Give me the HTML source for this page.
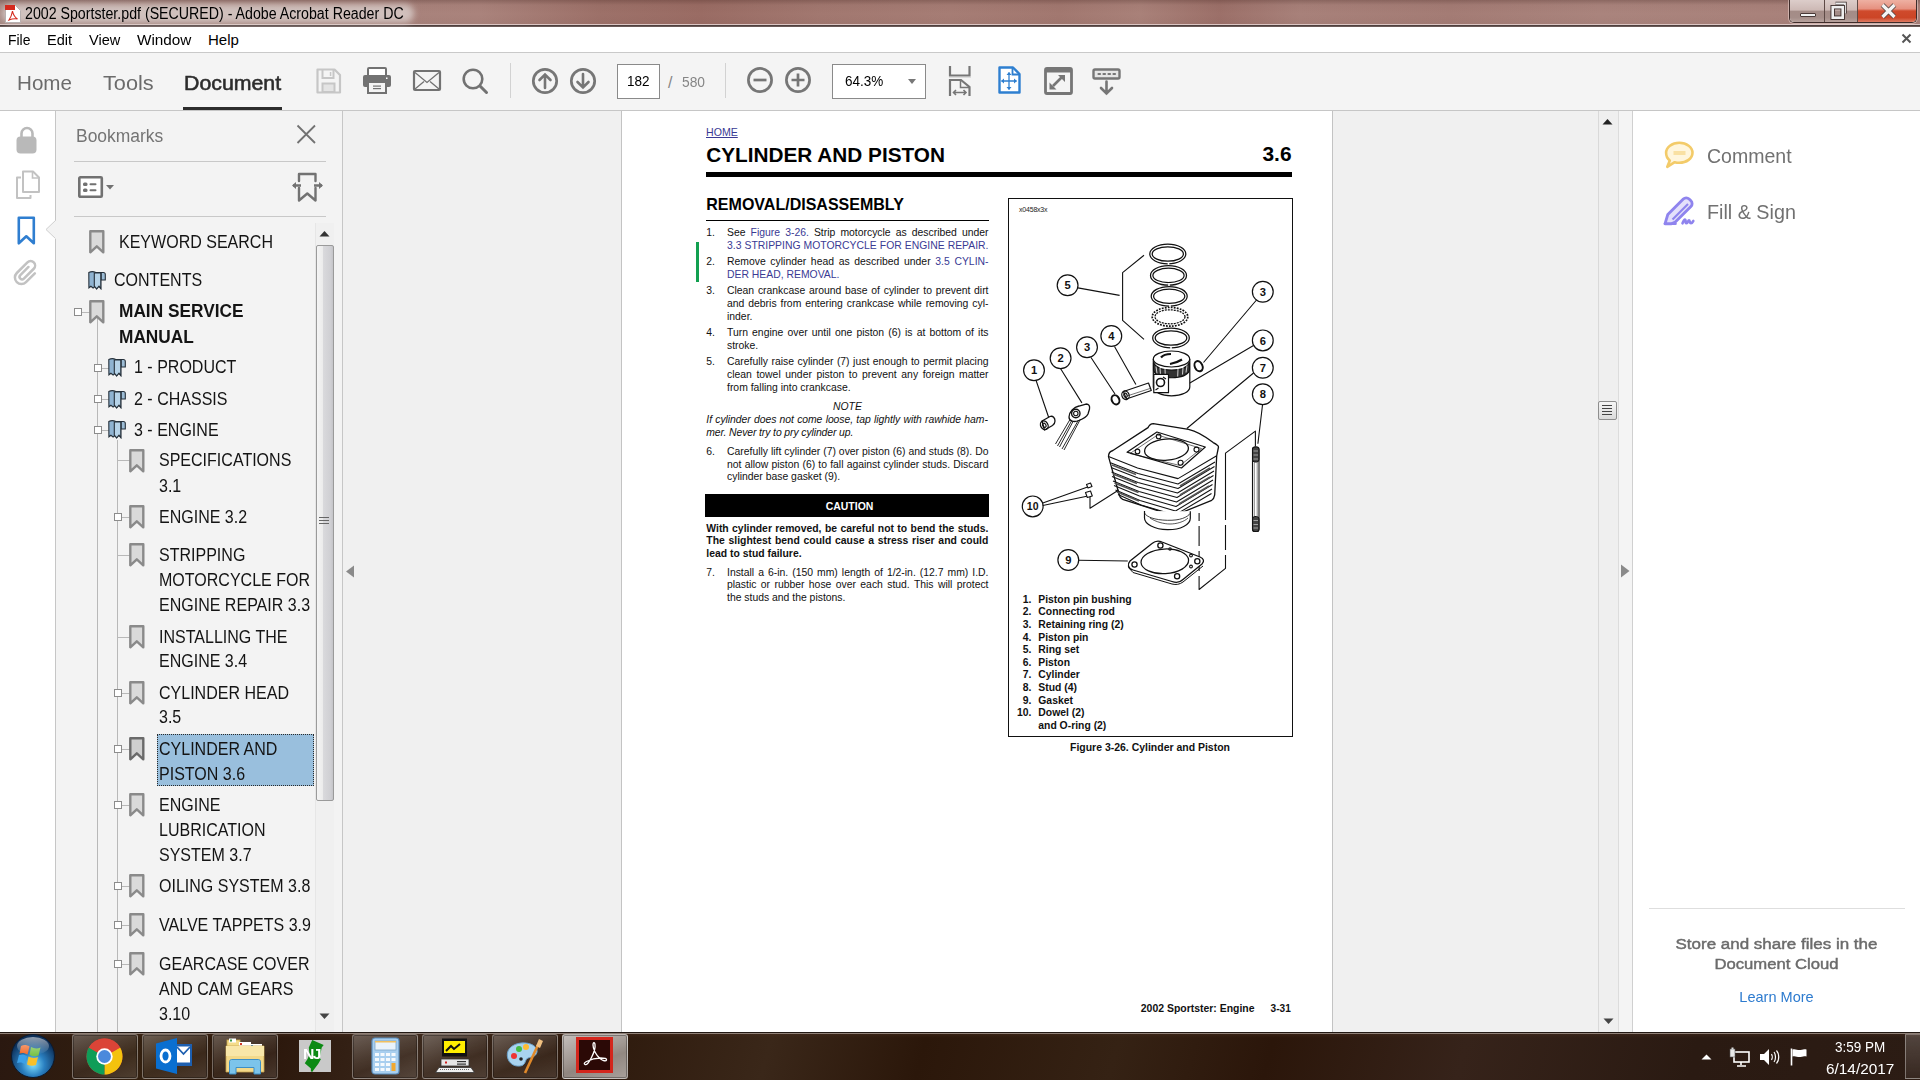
<!DOCTYPE html>
<html><head><meta charset="utf-8">
<style>
*{margin:0;padding:0;box-sizing:border-box}
html,body{width:1920px;height:1080px;overflow:hidden;background:#fff;font-family:"Liberation Sans",sans-serif}
.a{position:absolute}
.t{position:absolute;white-space:nowrap;line-height:1;transform-origin:0 0}
svg{position:absolute;overflow:visible}
#title{left:0;top:0;width:1920px;height:27px;background:linear-gradient(90deg,#a88a84 0.0%,#a6827b 15.6%,#aa837c 25.0%,#9d7169 31.2%,#9a6c64 36.5%,#a27870 42.7%,#a67d75 49.5%,#a27870 55.2%,#a98179 59.4%,#9c7069 63.5%,#a8817a 67.7%,#a47c75 75.5%,#aa847d 83.3%,#a88079 100.0%)}
#title .shade{position:absolute;left:0;right:0;top:0;height:27px;background:linear-gradient(180deg,rgba(60,30,25,.28) 0,rgba(60,30,25,.04) 5px,rgba(255,255,255,0) 14px,rgba(40,20,20,.03) 24px,#dcc6c4 24px,#dcc6c4 25px,#4e403e 25px,#4e403e 26px,#6a5a58 26px)}
#menubar{left:0;top:27px;width:1920px;height:26px;background:#fff;border-bottom:1px solid #c9c9c9}
#toolbar{left:0;top:53px;width:1920px;height:58px;background:#f4f4f4;border-bottom:1px solid #c6c6c6}
#leftnav{left:0;top:111px;width:56px;height:921px;background:#fff;border-right:1px solid #c6c6c6}
#bmpanel{left:56px;top:111px;width:287px;height:921px;background:#f3f3f3;border-right:1px solid #c6c6c6}
#docarea{left:343px;top:111px;width:1290px;height:921px;background:#f0f0f0}
#page{left:621px;top:111px;width:712px;height:921px;background:#fff;border-left:1px solid #c3c3c3;border-right:1px solid #c3c3c3}
#rpane{left:1632px;top:111px;width:288px;height:921px;background:#fff;border-left:1px solid #d0d0d0}
#taskbar{left:0;top:1032px;width:1920px;height:48px;background:linear-gradient(180deg,rgba(70,45,30,.6) 0,rgba(0,0,0,0) 6px),linear-gradient(105deg,#2a1810 0%,#33200f 8%,#2b170b 14%,#3a281c 22%,#2c180b 30%,#3a2719 40%,#2b170a 48%,#352214 58%,#2b160a 66%,#36231a 76%,#2a1a12 88%,#2c1c14 100%)}
.tb{top:1034px;width:66px;height:45px;border:1px solid rgba(255,255,255,.28);border-radius:3px;background:linear-gradient(160deg,rgba(255,255,255,.28) 0,rgba(255,255,255,.12) 40%,rgba(255,255,255,.06) 60%,rgba(255,255,255,.14) 100%);box-shadow:inset 0 0 0 1px rgba(0,0,0,.3)}
.tb.act{background:linear-gradient(160deg,rgba(255,255,255,.72) 0,rgba(255,255,255,.55) 45%,rgba(255,255,255,.48) 60%,rgba(255,255,255,.58) 100%)}
.menu{top:32px;font-size:15px;color:#000}
.tab{font-size:20px;color:#6b6b6b}
</style></head><body>
<!-- TITLE BAR -->
<div id="title" class="a"><div class="shade"></div></div>
<div class="a" style="left:2px;top:4px;width:412px;height:19px;background:rgba(222,212,209,.75);border-radius:9px;filter:blur(3px)"></div>
<svg style="left:4px;top:4px" width="18" height="20" viewBox="0 0 18 20">
  <path d="M1.5 1.5h10l5 5v12h-15z" fill="#fff" stroke="#b8b0b0" stroke-width="1"/>
  <rect x="1" y="1" width="10" height="5" fill="#d42a1e"/>
  <path d="M5 16c2-3 3-6 3.5-9 .5 3 2 6 5 8-3-.5-6 0-8.5 1z" fill="none" stroke="#d42a1e" stroke-width="1.1"/>
</svg>
<div class="t" style="left:25px;top:6px;font-size:16px;color:#000;transform:scaleX(.887)">2002 Sportster.pdf (SECURED) - Adobe Acrobat Reader DC</div>
<!-- window buttons -->
<div class="a" style="left:1789px;top:0;width:128px;height:23px;border:1px solid #3e2c2a;border-top:none;border-radius:0 0 5px 5px;overflow:hidden;background:#fff;box-shadow:0 0 0 1px rgba(255,235,230,.45)">
  <div class="a" style="left:0;top:0;width:35px;height:22px;background:linear-gradient(180deg,#dccdca 0,#cdb9b5 45%,#a48c87 52%,#a58e89 80%,#b8a29d 100%);border-right:1px solid #5e4a46"></div>
  <div class="a" style="left:35px;top:0;width:33px;height:22px;background:linear-gradient(180deg,#dccdca 0,#cdb9b5 45%,#a48c87 52%,#a58e89 80%,#b8a29d 100%);border-right:1px solid #5e4a46"></div>
  <div class="a" style="left:68px;top:0;width:60px;height:22px;background:linear-gradient(180deg,#eeb0a2 0,#e69180 40%,#cf4a2c 50%,#cc4526 80%,#de7a62 100%)"></div>
  <div class="a" style="left:10px;top:13px;width:16px;height:4px;background:#f2f2f2;border:1px solid #4a3a38;border-radius:1px"></div>
  <svg style="left:41px;top:2px" width="18" height="18" viewBox="0 0 18 18">
   <path d="M4.500 1.500h9.500v10" fill="none" stroke="#3a2c2a" stroke-width="3.400"/>
   <path d="M4.500 1.500h9.500v10" fill="none" stroke="#eee" stroke-width="1.800"/>
   <rect x="1.700" y="5.200" width="10" height="10.500" fill="none" stroke="#3a2c2a" stroke-width="4.400"/>
   <rect x="1.700" y="5.200" width="10" height="10.500" fill="none" stroke="#eee" stroke-width="2.600"/>
  </svg>
  <svg style="left:90px;top:3px" width="17" height="16" viewBox="0 0 17 16"><path d="M2.500 2l12 12M14.500 2l-12 12" stroke="#5a4a48" stroke-width="5"/><path d="M2.500 2l12 12M14.500 2l-12 12" stroke="#f4f4f4" stroke-width="3.200"/></svg>
</div>

<!-- MENU BAR -->
<div id="menubar" class="a"></div>
<div class="t menu" style="left:8px;transform:scaleX(.93)">File</div>
<div class="t menu" style="left:47px;transform:scaleX(.97)">Edit</div>
<div class="t menu" style="left:89px;transform:scaleX(.97)">View</div>
<div class="t menu" style="left:137px;transform:scaleX(1.02)">Window</div>
<div class="t menu" style="left:208px">Help</div>
<svg style="left:1900px;top:33px" width="14" height="12" viewBox="0 0 14 12"><path d="M2.5 1.5l8 8M10.5 1.5l-8 8" stroke="#555" stroke-width="2"/></svg>

<!-- TOOLBAR -->
<div id="toolbar" class="a"></div>
<div class="t tab" style="left:17px;top:73px;transform:scaleX(1.03)">Home</div>
<div class="t tab" style="left:103px;top:73px;transform:scaleX(1.086)">Tools</div>
<div class="t tab" style="left:184px;top:73px;color:#2c2c2c;-webkit-text-stroke:.55px #2c2c2c;transform:scaleX(1.065)">Document</div>
<div class="a" style="left:183px;top:107px;width:99px;height:3px;background:#2c2c2c"></div>
<!-- save -->
<svg style="left:316px;top:68px" width="26" height="26" viewBox="0 0 26 26">
  <path d="M1.5 1.5h17l5.5 5.5v17.5h-22.5z" fill="none" stroke="#c6c6c6" stroke-width="2.2" stroke-linejoin="round"/>
  <path d="M6.5 2v8h11v-8" fill="none" stroke="#c6c6c6" stroke-width="2"/>
  <rect x="13.8" y="4" width="1.5" height="4" fill="#c6c6c6"/>
  <rect x="6.5" y="15.5" width="12" height="8.5" fill="#e4e4e4" stroke="#c6c6c6" stroke-width="2"/>
</svg>
<!-- print -->
<svg style="left:363px;top:67px" width="28" height="27" viewBox="0 0 28 27">
  <rect x="5" y="1" width="18" height="10" fill="#fff" stroke="#727272" stroke-width="2" rx="1"/>
  <rect x="0" y="8" width="28" height="12" rx="2" fill="#727272"/>
  <rect x="5" y="15" width="18" height="11" fill="#f4f4f4" stroke="#727272" stroke-width="2"/>
  <rect x="10" y="18.5" width="8" height="1.2" fill="#727272"/><rect x="10" y="21" width="8" height="1.2" fill="#727272"/>
  <rect x="23" y="10.5" width="1.5" height="1.5" fill="#fff"/>
</svg>
<!-- mail -->
<svg style="left:413px;top:70px" width="28" height="21" viewBox="0 0 28 21">
  <rect x="1" y="1" width="26" height="19" rx="1" fill="none" stroke="#727272" stroke-width="2.2"/>
  <path d="M2 2.5l12 10 12-10M2 19l9-7.5M26 19l-9-7.5" fill="none" stroke="#727272" stroke-width="1.3"/>
</svg>
<!-- search -->
<svg style="left:462px;top:68px" width="27" height="26" viewBox="0 0 27 26">
  <circle cx="11" cy="11" r="9.3" fill="none" stroke="#727272" stroke-width="2.6"/>
  <path d="M18 18l6.5 6.5" stroke="#727272" stroke-width="3" stroke-linecap="round"/>
</svg>
<div class="a" style="left:510px;top:63px;width:1px;height:35px;background:#d2d2d2"></div>
<!-- up/down -->
<svg style="left:531px;top:67px" width="28" height="28" viewBox="0 0 28 28">
  <circle cx="14" cy="14" r="11.7" fill="none" stroke="#767676" stroke-width="2.7"/>
  <path d="M14 21V7.5M8.5 13l5.5-5.5 5.5 5.5" fill="none" stroke="#767676" stroke-width="2.6" stroke-linecap="round"/>
</svg>
<svg style="left:569px;top:67px" width="28" height="28" viewBox="0 0 28 28">
  <circle cx="14" cy="14" r="11.7" fill="none" stroke="#767676" stroke-width="2.7"/>
  <path d="M14 7v13.5M8.5 15l5.5 5.5 5.5-5.5" fill="none" stroke="#767676" stroke-width="2.6" stroke-linecap="round"/>
</svg>
<div class="a" style="left:617px;top:64px;width:43px;height:35px;background:#fff;border:1px solid #8a8a8a"></div>
<div class="t" style="left:627px;top:73px;font-size:15px;color:#000;transform:scaleX(.9)">182</div>
<div class="t" style="left:668px;top:75px;font-size:16px;color:#858585">/</div>
<div class="t" style="left:682px;top:74px;font-size:15px;color:#858585;transform:scaleX(.92)">580</div>
<div class="a" style="left:725px;top:63px;width:1px;height:35px;background:#d2d2d2"></div>
<svg style="left:746px;top:66px" width="28" height="28" viewBox="0 0 28 28">
  <circle cx="14" cy="14" r="11.6" fill="none" stroke="#767676" stroke-width="2.7"/>
  <path d="M7.5 14h13" stroke="#767676" stroke-width="2.7"/>
</svg>
<svg style="left:784px;top:66px" width="28" height="28" viewBox="0 0 28 28">
  <circle cx="14" cy="14" r="11.6" fill="none" stroke="#767676" stroke-width="2.7"/>
  <path d="M7.5 14h13M14 7.5v13" stroke="#767676" stroke-width="2.7"/>
</svg>
<div class="a" style="left:832px;top:64px;width:94px;height:35px;background:#fff;border:1px solid #8a8a8a"></div>
<div class="t" style="left:845px;top:73px;font-size:15px;color:#000;transform:scaleX(.9)">64.3%</div>
<svg style="left:907px;top:79px" width="10" height="6" viewBox="0 0 10 6"><path d="M1 0h8l-4 5z" fill="#777"/></svg>
<!-- scroll mode icon -->
<svg style="left:948px;top:65px" width="24" height="32" viewBox="0 0 24 32">
  <path d="M2 1v9.5h19.5V1" fill="none" stroke="#767676" stroke-width="2.2"/>
  <path d="M1 12.5h22" stroke="#dcdcdc" stroke-width="1"/>
  <path d="M2 31V15h11l8.5 7v9" fill="none" stroke="#767676" stroke-width="2.2"/>
  <path d="M12.5 15v7.5h9" fill="none" stroke="#767676" stroke-width="1.5"/>
  <path d="M5.5 27.5h12.5M8 25l-2.5 2.5 2.5 2.5M15.5 25l2.5 2.5-2.5 2.5" fill="none" stroke="#767676" stroke-width="1.6"/>
</svg>
<!-- fit page (blue) -->
<svg style="left:998px;top:66px" width="24" height="28" viewBox="0 0 24 28">
  <path d="M1.5 1.5h13.5l6.5 6.5v18.5h-20z" fill="#fff" stroke="#2e7fd0" stroke-width="2.4" stroke-linejoin="round"/>
  <path d="M14.5 1.5v7h7" fill="none" stroke="#2e7fd0" stroke-width="1.8"/>
  <path d="M11 6.5v17M3.5 15h15" stroke="#2e7fd0" stroke-width="1.3"/>
  <path d="M8.5 9l2.5-3 2.5 3zM8.5 21l2.5 3 2.5-3zM6 12.5l-3 2.5 3 2.5zM16 12.5l3 2.5-3 2.5z" fill="#2e7fd0"/>
</svg>
<!-- full screen -->
<svg style="left:1044px;top:67px" width="29" height="28" viewBox="0 0 29 28">
  <rect x="1.5" y="1.5" width="26" height="25" rx="1.5" fill="none" stroke="#767676" stroke-width="2.8"/>
  <rect x="1.5" y="1.5" width="26" height="4" fill="#767676"/>
  <path d="M9 19l10-10" stroke="#767676" stroke-width="2.6"/>
  <path d="M14 8h7v7zM5.5 15.5v7h7z" fill="#767676"/>
</svg>
<!-- read mode -->
<svg style="left:1092px;top:68px" width="30" height="27" viewBox="0 0 30 27">
  <rect x="1.5" y="1.5" width="26" height="9" rx="1.5" fill="#e6e6e6" stroke="#767676" stroke-width="2.4"/>
  <path d="M6.5 6h1.5M11.5 6h1.5M16.5 6h1.5M21.5 6h1.5" stroke="#767676" stroke-width="2.2" stroke-linecap="round"/>
  <path d="M14.5 13.5v12M9 20l5.5 5.5 5.5-5.5" fill="none" stroke="#767676" stroke-width="2.6" stroke-linecap="round"/>
</svg>

<!-- PANELS -->
<div id="leftnav" class="a"></div>
<div id="bmpanel" class="a"></div>
<div id="docarea" class="a"></div>
<div id="page" class="a"></div>
<div id="rpane" class="a"></div>
<div id="taskbar" class="a"></div>
<!-- left nav icons -->
<svg style="left:16px;top:125px" width="22" height="30" viewBox="0 0 22 30">
  <path d="M5.5 13V8.5a5.5 5.5 0 0 1 11 0V13" fill="none" stroke="#b9b9b9" stroke-width="2.6"/>
  <rect x="0.5" y="11.5" width="20" height="17" rx="4" fill="#b9b9b9"/>
</svg>
<svg style="left:15px;top:170px" width="26" height="30" viewBox="0 0 26 30">
  <path d="M6 7.5H2v20.5h13.5v-3" fill="none" stroke="#c2c2c2" stroke-width="2" stroke-linejoin="round"/>
  <path d="M8 1.5h10l6 6v14.5h-16z" fill="#fff" stroke="#c2c2c2" stroke-width="2" stroke-linejoin="round"/>
  <path d="M17.5 1.5v6.5h6.5" fill="none" stroke="#c2c2c2" stroke-width="1.6"/>
</svg>
<svg style="left:17px;top:216px" width="19" height="29" viewBox="0 0 19 29">
  <path d="M1.8 1.8h15v25.5l-7.5-7-7.5 7z" fill="none" stroke="#2f7ed0" stroke-width="2.6" stroke-linejoin="round"/>
</svg>
<svg style="left:45px;top:220px" width="12" height="20" viewBox="0 0 12 20"><path d="M11 0v0L1 9.5 11 19" fill="#f3f3f3" stroke="#d0d0d0" stroke-width="1"/><rect x="10.5" y="1" width="2" height="18" fill="#f3f3f3"/></svg>
<svg style="left:12px;top:258px" width="28" height="30" viewBox="0 0 28 30">
  <g transform="rotate(45 14 15)"><path d="M11.5 9v11.5a2.5 2.5 0 0 0 5 0V6.5a4.5 4.5 0 0 0-9 0v15a6.5 6.5 0 0 0 13 0V9" fill="none" stroke="#c2c2c2" stroke-width="2.5" stroke-linecap="round"/></g>
</svg>

<!-- bookmarks header -->
<div class="t" style="left:76px;top:127px;font-size:18px;color:#747474;transform:scaleX(.97)">Bookmarks</div>
<svg style="left:296px;top:124px" width="21" height="21" viewBox="0 0 21 21"><path d="M1.5 1.5l17.5 17.5M19 1.5L1.5 19" stroke="#727272" stroke-width="1.8"/></svg>
<div class="a" style="left:74px;top:161px;width:252px;height:1px;background:#c8c8c8"></div>
<svg style="left:78px;top:176px" width="38" height="23" viewBox="0 0 38 23">
  <rect x="1.3" y="1.3" width="22.5" height="19.5" rx="1" fill="#fff" stroke="#717171" stroke-width="2.6"/>
  <rect x="5" y="6.5" width="4.5" height="3.5" rx="1.5" fill="#717171"/><rect x="5" y="12.5" width="4.5" height="3.5" rx="1.5" fill="#717171"/>
  <rect x="11.5" y="7.3" width="7" height="2" rx="1" fill="#717171"/><rect x="11.5" y="13.3" width="7" height="2" rx="1" fill="#717171"/>
  <path d="M28 9h8l-4 4.5z" fill="#717171"/>
</svg>
<svg style="left:291px;top:172px" width="33" height="30" viewBox="0 0 33 30">
  <path d="M8 9V2h16.5v7M8 16v12.5l8.3-7 8.2 7V16" fill="none" stroke="#727272" stroke-width="2.4" stroke-linejoin="round" stroke-linecap="round"/>
  <path d="M2 13.5h8M23 13.5h8" stroke="#727272" stroke-width="2.4"/>
  <path d="M5 10l-4 3.5 4 3.5zM28 10l4 3.5-4 3.5z" fill="#727272"/>
</svg>
<div class="a" style="left:74px;top:216px;width:252px;height:1px;background:#c8c8c8"></div>

<!-- scrollbar -->
<div class="a" style="left:315px;top:223px;width:19px;height:809px;background:#f0f0f0;border-left:1px solid #e6e6e6"></div>
<svg style="left:319px;top:230px" width="11" height="7" viewBox="0 0 11 7"><path d="M0.5 6.5L5.5 1l5 5.5z" fill="#333"/></svg>
<div class="a" style="left:316px;top:245px;width:18px;height:556px;border:1px solid #9a9a9a;border-radius:2px;background:linear-gradient(90deg,#f4f4f4 0,#ececec 35%,#d9d9dc 40%,#cfcfd3 85%,#c4c4c8 100%)"></div>
<div class="a" style="left:319px;top:517px;width:10px;height:1px;background:#666"></div>
<div class="a" style="left:319px;top:520px;width:10px;height:1px;background:#666"></div>
<div class="a" style="left:319px;top:523px;width:10px;height:1px;background:#666"></div>
<svg style="left:319px;top:1013px" width="11" height="7" viewBox="0 0 11 7"><path d="M0.5 0.5h10L5.5 6z" fill="#444"/></svg>

<!-- tree lines -->
<div class="a" style="left:97px;top:316px;width:1px;height:716px;background:#b8b8b8"></div>
<div class="a" style="left:117px;top:440px;width:1px;height:592px;background:#b8b8b8"></div>
<svg style="left:89.0px;top:229.7px" width="16" height="24" viewBox="0 0 16 24"><path d="M1.3 1.3h13v21l-6.5-6-6.5 6z" fill="#dadada" stroke="#8a8a8a" stroke-width="2.4" stroke-linejoin="round"/></svg>
<div class="t" style="left:119px;top:232.5px;font-size:18px;color:#141414;transform:scaleX(0.89)">KEYWORD SEARCH</div>
<svg style="left:88.0px;top:270.6px" width="19" height="19" viewBox="0 0 19 19"><path d="M13 9h4.3V3.5c0-1-1-2-2-2H13z" fill="#9dbdd6" stroke="#25303a" stroke-width="1.1"/><path d="M0.8 1.5c2-1 5-1 7 0h5v16l-2-2.3-2.3 2.6-1.2-2.5-2.2 1.7-2.2-1.8-2 1.6z" fill="#8fb3d1" stroke="#25303a" stroke-width="1.1"/><path d="M6.3 2h6.5v15.5l-1.8-2.3-2.3 2.7-2.4-2.7z" fill="#b6d3e8" stroke="#25303a" stroke-width="1.1"/></svg>
<div class="t" style="left:114px;top:271.1px;font-size:18px;color:#141414;transform:scaleX(0.89)">CONTENTS</div>
<div class="a" style="left:82px;top:312px;width:16px;height:1px;background:#b8b8b8"></div>
<div class="a" style="left:74px;top:308px;width:8px;height:8px;background:#fff;border:1px solid #8c8c8c"></div>
<svg style="left:89.0px;top:299.6px" width="16" height="24" viewBox="0 0 16 24"><path d="M1.3 1.3h13v21l-6.5-6-6.5 6z" fill="#dadada" stroke="#8a8a8a" stroke-width="2.4" stroke-linejoin="round"/></svg>
<div class="t" style="left:119px;top:302.4px;font-size:18px;font-weight:bold;color:#141414;transform:scaleX(0.96)">MAIN SERVICE</div>
<div class="t" style="left:119px;top:327.6px;font-size:18px;font-weight:bold;color:#141414;transform:scaleX(0.96)">MANUAL</div>
<div class="a" style="left:97.5px;top:368px;width:12px;height:1px;background:#b8b8b8"></div>
<div class="a" style="left:94px;top:364px;width:8px;height:8px;background:#fff;border:1px solid #8c8c8c"></div>
<svg style="left:108.0px;top:358.0px" width="19" height="19" viewBox="0 0 19 19"><path d="M13 9h4.3V3.5c0-1-1-2-2-2H13z" fill="#9dbdd6" stroke="#25303a" stroke-width="1.1"/><path d="M0.8 1.5c2-1 5-1 7 0h5v16l-2-2.3-2.3 2.6-1.2-2.5-2.2 1.7-2.2-1.8-2 1.6z" fill="#8fb3d1" stroke="#25303a" stroke-width="1.1"/><path d="M6.3 2h6.5v15.5l-1.8-2.3-2.3 2.7-2.4-2.7z" fill="#b6d3e8" stroke="#25303a" stroke-width="1.1"/></svg>
<div class="t" style="left:134px;top:358.4px;font-size:18px;color:#141414;transform:scaleX(0.89)">1 - PRODUCT</div>
<div class="a" style="left:97.5px;top:399px;width:12px;height:1px;background:#b8b8b8"></div>
<div class="a" style="left:94px;top:395px;width:8px;height:8px;background:#fff;border:1px solid #8c8c8c"></div>
<svg style="left:108.0px;top:389.6px" width="19" height="19" viewBox="0 0 19 19"><path d="M13 9h4.3V3.5c0-1-1-2-2-2H13z" fill="#9dbdd6" stroke="#25303a" stroke-width="1.1"/><path d="M0.8 1.5c2-1 5-1 7 0h5v16l-2-2.3-2.3 2.6-1.2-2.5-2.2 1.7-2.2-1.8-2 1.6z" fill="#8fb3d1" stroke="#25303a" stroke-width="1.1"/><path d="M6.3 2h6.5v15.5l-1.8-2.3-2.3 2.7-2.4-2.7z" fill="#b6d3e8" stroke="#25303a" stroke-width="1.1"/></svg>
<div class="t" style="left:134px;top:390.0px;font-size:18px;color:#141414;transform:scaleX(0.89)">2 - CHASSIS</div>
<div class="a" style="left:97.5px;top:430px;width:12px;height:1px;background:#b8b8b8"></div>
<div class="a" style="left:94px;top:426px;width:8px;height:8px;background:#fff;border:1px solid #8c8c8c"></div>
<svg style="left:108.0px;top:420.1px" width="19" height="19" viewBox="0 0 19 19"><path d="M13 9h4.3V3.5c0-1-1-2-2-2H13z" fill="#9dbdd6" stroke="#25303a" stroke-width="1.1"/><path d="M0.8 1.5c2-1 5-1 7 0h5v16l-2-2.3-2.3 2.6-1.2-2.5-2.2 1.7-2.2-1.8-2 1.6z" fill="#8fb3d1" stroke="#25303a" stroke-width="1.1"/><path d="M6.3 2h6.5v15.5l-1.8-2.3-2.3 2.7-2.4-2.7z" fill="#b6d3e8" stroke="#25303a" stroke-width="1.1"/></svg>
<div class="t" style="left:134px;top:420.5px;font-size:18px;color:#141414;transform:scaleX(0.89)">3 - ENGINE</div>
<div class="a" style="left:117.5px;top:460px;width:14px;height:1px;background:#b8b8b8"></div>
<svg style="left:129.0px;top:448.5px" width="16" height="24" viewBox="0 0 16 24"><path d="M1.3 1.3h13v21l-6.5-6-6.5 6z" fill="#dadada" stroke="#8a8a8a" stroke-width="2.4" stroke-linejoin="round"/></svg>
<div class="t" style="left:158.5px;top:451.3px;font-size:18px;color:#141414;transform:scaleX(0.89)">SPECIFICATIONS</div>
<div class="t" style="left:158.5px;top:476.5px;font-size:18px;color:#141414;transform:scaleX(0.89)">3.1</div>
<div class="a" style="left:117.5px;top:517px;width:14px;height:1px;background:#b8b8b8"></div>
<div class="a" style="left:114px;top:513px;width:8px;height:8px;background:#fff;border:1px solid #8c8c8c"></div>
<svg style="left:129.0px;top:504.8px" width="16" height="24" viewBox="0 0 16 24"><path d="M1.3 1.3h13v21l-6.5-6-6.5 6z" fill="#dadada" stroke="#8a8a8a" stroke-width="2.4" stroke-linejoin="round"/></svg>
<div class="t" style="left:158.5px;top:507.6px;font-size:18px;color:#141414;transform:scaleX(0.89)">ENGINE 3.2</div>
<div class="a" style="left:117.5px;top:555px;width:14px;height:1px;background:#b8b8b8"></div>
<svg style="left:129.0px;top:543.3px" width="16" height="24" viewBox="0 0 16 24"><path d="M1.3 1.3h13v21l-6.5-6-6.5 6z" fill="#dadada" stroke="#8a8a8a" stroke-width="2.4" stroke-linejoin="round"/></svg>
<div class="t" style="left:158.5px;top:546.1px;font-size:18px;color:#141414;transform:scaleX(0.89)">STRIPPING</div>
<div class="t" style="left:158.5px;top:570.8px;font-size:18px;color:#141414;transform:scaleX(0.89)">MOTORCYCLE FOR</div>
<div class="t" style="left:158.5px;top:595.8px;font-size:18px;color:#141414;transform:scaleX(0.89)">ENGINE REPAIR 3.3</div>
<div class="a" style="left:117.5px;top:637px;width:14px;height:1px;background:#b8b8b8"></div>
<svg style="left:129.0px;top:624.8px" width="16" height="24" viewBox="0 0 16 24"><path d="M1.3 1.3h13v21l-6.5-6-6.5 6z" fill="#dadada" stroke="#8a8a8a" stroke-width="2.4" stroke-linejoin="round"/></svg>
<div class="t" style="left:158.5px;top:627.6px;font-size:18px;color:#141414;transform:scaleX(0.89)">INSTALLING THE</div>
<div class="t" style="left:158.5px;top:651.8px;font-size:18px;color:#141414;transform:scaleX(0.89)">ENGINE 3.4</div>
<div class="a" style="left:117.5px;top:693px;width:14px;height:1px;background:#b8b8b8"></div>
<div class="a" style="left:114px;top:689px;width:8px;height:8px;background:#fff;border:1px solid #8c8c8c"></div>
<svg style="left:129.0px;top:681.0px" width="16" height="24" viewBox="0 0 16 24"><path d="M1.3 1.3h13v21l-6.5-6-6.5 6z" fill="#dadada" stroke="#8a8a8a" stroke-width="2.4" stroke-linejoin="round"/></svg>
<div class="t" style="left:158.5px;top:683.8px;font-size:18px;color:#141414;transform:scaleX(0.89)">CYLINDER HEAD</div>
<div class="t" style="left:158.5px;top:708.1px;font-size:18px;color:#141414;transform:scaleX(0.89)">3.5</div>
<div class="a" style="left:157px;top:734px;width:157px;height:52px;background:#99bfdd;border:1px dotted #2a2a2a"></div>
<div class="a" style="left:117.5px;top:749px;width:14px;height:1px;background:#b8b8b8"></div>
<div class="a" style="left:114px;top:745px;width:8px;height:8px;background:#fff;border:1px solid #8c8c8c"></div>
<svg style="left:129.0px;top:737.0px" width="16" height="24" viewBox="0 0 16 24"><path d="M1.3 1.3h13v21l-6.5-6-6.5 6z" fill="#cfcfcf" stroke="#6a6a6a" stroke-width="2.4" stroke-linejoin="round"/></svg>
<div class="t" style="left:158.5px;top:739.8px;font-size:18px;color:#141414;transform:scaleX(0.89)">CYLINDER AND</div>
<div class="t" style="left:158.5px;top:764.8px;font-size:18px;color:#141414;transform:scaleX(0.89)">PISTON 3.6</div>
<div class="a" style="left:117.5px;top:805px;width:14px;height:1px;background:#b8b8b8"></div>
<div class="a" style="left:114px;top:801px;width:8px;height:8px;background:#fff;border:1px solid #8c8c8c"></div>
<svg style="left:129.0px;top:792.7px" width="16" height="24" viewBox="0 0 16 24"><path d="M1.3 1.3h13v21l-6.5-6-6.5 6z" fill="#dadada" stroke="#8a8a8a" stroke-width="2.4" stroke-linejoin="round"/></svg>
<div class="t" style="left:158.5px;top:795.5px;font-size:18px;color:#141414;transform:scaleX(0.89)">ENGINE</div>
<div class="t" style="left:158.5px;top:820.5px;font-size:18px;color:#141414;transform:scaleX(0.89)">LUBRICATION</div>
<div class="t" style="left:158.5px;top:845.5px;font-size:18px;color:#141414;transform:scaleX(0.89)">SYSTEM 3.7</div>
<div class="a" style="left:117.5px;top:886px;width:14px;height:1px;background:#b8b8b8"></div>
<div class="a" style="left:114px;top:882px;width:8px;height:8px;background:#fff;border:1px solid #8c8c8c"></div>
<svg style="left:129.0px;top:873.7px" width="16" height="24" viewBox="0 0 16 24"><path d="M1.3 1.3h13v21l-6.5-6-6.5 6z" fill="#dadada" stroke="#8a8a8a" stroke-width="2.4" stroke-linejoin="round"/></svg>
<div class="t" style="left:158.5px;top:876.5px;font-size:18px;color:#141414;transform:scaleX(0.89)">OILING SYSTEM 3.8</div>
<div class="a" style="left:117.5px;top:925px;width:14px;height:1px;background:#b8b8b8"></div>
<div class="a" style="left:114px;top:921px;width:8px;height:8px;background:#fff;border:1px solid #8c8c8c"></div>
<svg style="left:129.0px;top:912.7px" width="16" height="24" viewBox="0 0 16 24"><path d="M1.3 1.3h13v21l-6.5-6-6.5 6z" fill="#dadada" stroke="#8a8a8a" stroke-width="2.4" stroke-linejoin="round"/></svg>
<div class="t" style="left:158.5px;top:915.5px;font-size:18px;color:#141414;transform:scaleX(0.89)">VALVE TAPPETS 3.9</div>
<div class="a" style="left:117.5px;top:964px;width:14px;height:1px;background:#b8b8b8"></div>
<div class="a" style="left:114px;top:960px;width:8px;height:8px;background:#fff;border:1px solid #8c8c8c"></div>
<svg style="left:129.0px;top:952.0px" width="16" height="24" viewBox="0 0 16 24"><path d="M1.3 1.3h13v21l-6.5-6-6.5 6z" fill="#dadada" stroke="#8a8a8a" stroke-width="2.4" stroke-linejoin="round"/></svg>
<div class="t" style="left:158.5px;top:954.8px;font-size:18px;color:#141414;transform:scaleX(0.89)">GEARCASE COVER</div>
<div class="t" style="left:158.5px;top:979.8px;font-size:18px;color:#141414;transform:scaleX(0.89)">AND CAM GEARS</div>
<div class="t" style="left:158.5px;top:1004.8px;font-size:18px;color:#141414;transform:scaleX(0.89)">3.10</div>
<div class="t" style="left:706px;top:126.63px;font-size:10.6px;color:#3a3a94;"><span style="text-decoration:underline">HOME</span></div>
<div class="t" style="left:706.3px;top:144.74px;font-size:20.75px;color:#000;font-weight:bold;">CYLINDER AND PISTON</div>
<div class="t" style="left:1262.5px;top:144.01px;font-size:20.9px;color:#000;font-weight:bold;">3.6</div>
<div class="a" style="left:706px;top:172px;width:586px;height:4.6px;background:#000"></div>
<div class="t" style="left:706.3px;top:196.44px;font-size:16.02px;color:#000;font-weight:bold;">REMOVAL/DISASSEMBLY</div>
<div class="a" style="left:706px;top:220px;width:283px;height:1.2px;background:#000"></div>
<div class="a" style="left:696px;top:242px;width:3px;height:40px;background:#12a050"></div>
<div class="t" style="left:706.3px;top:228.00px;font-size:10.4px;color:#111;">1.</div>
<div class="t" style="left:727px;top:228.00px;font-size:10.4px;color:#111;width:261.5px;text-align:justify;text-align-last:justify;">See <span style="color:#3a3a94">Figure 3-26.</span> Strip motorcycle as described under</div>
<div class="t" style="left:727px;top:240.60px;font-size:10.4px;color:#111;width:261.5px;text-align:justify;text-align-last:justify;"><span style="color:#3a3a94">3.3 STRIPPING MOTORCYCLE FOR ENGINE REPAIR.</span></div>
<div class="t" style="left:706.3px;top:257.00px;font-size:10.4px;color:#111;">2.</div>
<div class="t" style="left:727px;top:257.00px;font-size:10.4px;color:#111;width:261.5px;text-align:justify;text-align-last:justify;">Remove cylinder head as described under <span style="color:#3a3a94">3.5 CYLIN-</span></div>
<div class="t" style="left:727px;top:269.60px;font-size:10.4px;color:#111;"><span style="color:#3a3a94">DER HEAD, REMOVAL.</span></div>
<div class="t" style="left:706.3px;top:285.90px;font-size:10.4px;color:#111;">3.</div>
<div class="t" style="left:727px;top:285.90px;font-size:10.4px;color:#111;width:261.5px;text-align:justify;text-align-last:justify;">Clean crankcase around base of cylinder to prevent dirt</div>
<div class="t" style="left:727px;top:298.50px;font-size:10.4px;color:#111;width:261.5px;text-align:justify;text-align-last:justify;">and debris from entering crankcase while removing cyl-</div>
<div class="t" style="left:727px;top:311.60px;font-size:10.4px;color:#111;">inder.</div>
<div class="t" style="left:706.3px;top:327.90px;font-size:10.4px;color:#111;">4.</div>
<div class="t" style="left:727px;top:327.90px;font-size:10.4px;color:#111;width:261.5px;text-align:justify;text-align-last:justify;">Turn engine over until one piston (6) is at bottom of its</div>
<div class="t" style="left:727px;top:340.80px;font-size:10.4px;color:#111;">stroke.</div>
<div class="t" style="left:706.3px;top:356.80px;font-size:10.4px;color:#111;">5.</div>
<div class="t" style="left:727px;top:356.80px;font-size:10.4px;color:#111;width:261.5px;text-align:justify;text-align-last:justify;">Carefully raise cylinder (7) just enough to permit placing</div>
<div class="t" style="left:727px;top:369.60px;font-size:10.4px;color:#111;width:261.5px;text-align:justify;text-align-last:justify;">clean towel under piston to prevent any foreign matter</div>
<div class="t" style="left:727px;top:382.90px;font-size:10.4px;color:#111;">from falling into crankcase.</div>
<div class="t" style="left:706.3px;top:446.80px;font-size:10.4px;color:#111;">6.</div>
<div class="t" style="left:727px;top:446.80px;font-size:10.4px;color:#111;width:261.5px;text-align:justify;text-align-last:justify;">Carefully lift cylinder (7) over piston (6) and studs (8). Do</div>
<div class="t" style="left:727px;top:459.60px;font-size:10.4px;color:#111;width:261.5px;text-align:justify;text-align-last:justify;">not allow piston (6) to fall against cylinder studs. Discard</div>
<div class="t" style="left:727px;top:472.10px;font-size:10.4px;color:#111;">cylinder base gasket (9).</div>
<div class="t" style="left:706.3px;top:567.70px;font-size:10.4px;color:#111;">7.</div>
<div class="t" style="left:727px;top:567.70px;font-size:10.4px;color:#111;width:261.5px;text-align:justify;text-align-last:justify;">Install a 6-in. (150 mm) length of 1/2-in. (12.7 mm) I.D.</div>
<div class="t" style="left:727px;top:579.50px;font-size:10.4px;color:#111;width:261.5px;text-align:justify;text-align-last:justify;">plastic or rubber hose over each stud. This will protect</div>
<div class="t" style="left:727px;top:592.50px;font-size:10.4px;color:#111;">the studs and the pistons.</div>
<div class="t" style="left:833px;top:402.10px;font-size:10.4px;color:#111;font-style:italic;">NOTE</div>
<div class="t" style="left:706.3px;top:414.60px;font-size:10.4px;color:#111;font-style:italic;letter-spacing:-0.05px;width:281.5px;text-align:justify;text-align-last:justify;">If cylinder does not come loose, tap lightly with rawhide ham-</div>
<div class="t" style="left:706.3px;top:427.90px;font-size:10.4px;color:#111;font-style:italic;letter-spacing:-0.1px;">mer. Never try to pry cylinder up.</div>
<div class="a" style="left:705px;top:494px;width:284px;height:23px;background:#000"></div>
<div class="t" style="left:825.7px;top:501.94px;font-size:10.47px;color:#fff;font-weight:bold;">CAUTION</div>
<div class="t" style="left:706.3px;top:524.10px;font-size:10.4px;color:#111;font-weight:bold;width:282px;text-align:justify;text-align-last:justify;">With cylinder removed, be careful not to bend the studs.</div>
<div class="t" style="left:706.3px;top:535.90px;font-size:10.4px;color:#111;font-weight:bold;width:282px;text-align:justify;text-align-last:justify;">The slightest bend could cause a stress riser and could</div>
<div class="t" style="left:706.3px;top:548.80px;font-size:10.4px;color:#111;font-weight:bold;">lead to stud failure.</div>
<div class="a" style="left:1008px;top:198px;width:285px;height:539px;border:1.3px solid #111"></div>
<div class="t" style="left:1019px;top:206.27px;font-size:7px;color:#222;letter-spacing:-0.2px;">x0458x3x</div>
<div class="t" style="left:1001px;width:30.5px;text-align:right;top:594.81px;font-size:10.38px;font-weight:bold;color:#111">1.</div>
<div class="t" style="left:1038.3px;top:594.81px;font-size:10.38px;color:#111;font-weight:bold;">Piston pin bushing</div>
<div class="t" style="left:1001px;width:30.5px;text-align:right;top:607.11px;font-size:10.38px;font-weight:bold;color:#111">2.</div>
<div class="t" style="left:1038.3px;top:607.11px;font-size:10.38px;color:#111;font-weight:bold;">Connecting rod</div>
<div class="t" style="left:1001px;width:30.5px;text-align:right;top:619.81px;font-size:10.38px;font-weight:bold;color:#111">3.</div>
<div class="t" style="left:1038.3px;top:619.81px;font-size:10.38px;color:#111;font-weight:bold;">Retaining ring (2)</div>
<div class="t" style="left:1001px;width:30.5px;text-align:right;top:632.61px;font-size:10.38px;font-weight:bold;color:#111">4.</div>
<div class="t" style="left:1038.3px;top:632.61px;font-size:10.38px;color:#111;font-weight:bold;">Piston pin</div>
<div class="t" style="left:1001px;width:30.5px;text-align:right;top:645.11px;font-size:10.38px;font-weight:bold;color:#111">5.</div>
<div class="t" style="left:1038.3px;top:645.11px;font-size:10.38px;color:#111;font-weight:bold;">Ring set</div>
<div class="t" style="left:1001px;width:30.5px;text-align:right;top:657.81px;font-size:10.38px;font-weight:bold;color:#111">6.</div>
<div class="t" style="left:1038.3px;top:657.81px;font-size:10.38px;color:#111;font-weight:bold;">Piston</div>
<div class="t" style="left:1001px;width:30.5px;text-align:right;top:670.11px;font-size:10.38px;font-weight:bold;color:#111">7.</div>
<div class="t" style="left:1038.3px;top:670.11px;font-size:10.38px;color:#111;font-weight:bold;">Cylinder</div>
<div class="t" style="left:1001px;width:30.5px;text-align:right;top:683.11px;font-size:10.38px;font-weight:bold;color:#111">8.</div>
<div class="t" style="left:1038.3px;top:683.11px;font-size:10.38px;color:#111;font-weight:bold;">Stud (4)</div>
<div class="t" style="left:1001px;width:30.5px;text-align:right;top:695.81px;font-size:10.38px;font-weight:bold;color:#111">9.</div>
<div class="t" style="left:1038.3px;top:695.81px;font-size:10.38px;color:#111;font-weight:bold;">Gasket</div>
<div class="t" style="left:1001px;width:30.5px;text-align:right;top:708.41px;font-size:10.38px;font-weight:bold;color:#111">10.</div>
<div class="t" style="left:1038.3px;top:708.41px;font-size:10.38px;color:#111;font-weight:bold;">Dowel (2)</div>
<div class="t" style="left:1038.3px;top:720.81px;font-size:10.38px;color:#111;font-weight:bold;">and O-ring (2)</div>
<div class="t" style="left:1070px;top:743.04px;font-size:10.47px;color:#111;font-weight:bold;">Figure 3-26. Cylinder and Piston</div>
<div class="t" style="left:1140.8px;top:1003.76px;font-size:10.44px;color:#111;font-weight:bold;">2002 Sportster: Engine</div>
<div class="t" style="left:1270.6px;top:1004.05px;font-size:10.1px;color:#111;font-weight:bold;">3-31</div>
<svg style="left:1008px;top:198px" width="286" height="540" viewBox="1008 198 286 540">
<g fill="none" stroke="#111" stroke-width="1.1" stroke-linejoin="round">
 <!-- callout circles -->
 <g stroke-width="1.2">
 <circle cx="1067.6" cy="285.3" r="10.4"/>
 <circle cx="1262.8" cy="291.8" r="10.4"/>
 <circle cx="1262.8" cy="340.4" r="10.4"/>
 <circle cx="1262.8" cy="367.8" r="10.4"/>
 <circle cx="1262.8" cy="394.3" r="10.4"/>
 <circle cx="1111.3" cy="336" r="10.4"/>
 <circle cx="1087" cy="347.2" r="10.4"/>
 <circle cx="1060.6" cy="358.2" r="10.4"/>
 <circle cx="1034" cy="370.3" r="10.4"/>
 <circle cx="1032.7" cy="506.4" r="10.4"/>
 <circle cx="1068.3" cy="560" r="10.4"/>
 </g>
 <!-- leaders -->
 <path d="M1077.9 287.9L1119.6 295.4M1144 255.3L1122.6 272.6V320.4L1144 339.4"/>
 <path d="M1203.5 362.5L1256.5 300M1189 383.5L1253.5 345.5M1186.8 428.5L1253.5 373M1262.5 405L1257.9 443.7"/>
 <path d="M1114.5 346.5L1135.9 384.6M1091 357.5L1115 394M1060.5 368.5L1081.9 402.9M1036.1 380.5L1049.3 419.2"/>
 <path d="M1042.8 503L1089 486.5M1042.8 505.5L1088 496M1078.6 560.3L1127.8 561"/>
 <!-- rings -->
 <g stroke-width="1.25">
 <ellipse cx="1167.8" cy="254" rx="18" ry="9.8"/><ellipse cx="1167.8" cy="254" rx="15.6" ry="7.2"/>
 <ellipse cx="1168.5" cy="275.4" rx="18" ry="9.8"/><ellipse cx="1168.5" cy="275.4" rx="15.6" ry="7.2"/>
 <ellipse cx="1169.2" cy="296.3" rx="18" ry="9.8"/><ellipse cx="1169.2" cy="296.3" rx="15.6" ry="7.2"/>
 <ellipse cx="1170" cy="316.8" rx="17.8" ry="9.4" stroke-width="1.7" stroke-dasharray="1.8 1.2"/><ellipse cx="1170" cy="316.8" rx="15" ry="7" stroke-dasharray="2 1"/>
 <ellipse cx="1171" cy="338" rx="18.3" ry="9.8"/><ellipse cx="1171" cy="338" rx="15.8" ry="7.2"/>
 </g>
 <path d="M1168.5 262v3M1169 283v3M1170 304v3M1171 346v3" stroke="#fff" stroke-width="1.6"/>
 <!-- piston -->
 <path d="M1153.3 359v28c0 5 8 8.8 18.2 8.8s18.3-3.8 18.3-8.8v-28" fill="#fff" stroke-width="1.2"/>
 <ellipse cx="1171.5" cy="359" rx="18.2" ry="8" fill="#fff" stroke-width="1.2"/>
 <path d="M1161 357.5c2-2.5 6-3.5 10-3.5M1170 364c3-.5 8-2 12-4.5" stroke-width="2.2"/>
 <path d="M1153.5 362.5c2 5 8.5 7.5 18 7.5s16-2.5 18-7.5v8c-2 5-8.5 7.2-18 7.2s-16-2.2-18-7.2z" fill="#333"/>
 <path d="M1156 366.5l1 7M1160 368l.5 7M1165 369l.3 7.5M1178 369l-.3 7.5M1183 367.5l-.5 7M1187 365.5l-1 7" stroke="#fff" stroke-width=".8"/>
 <path d="M1153.8 374.4h14.7v18.3h-14.7z" fill="#fff" stroke-width="1.2"/>
 <circle cx="1160.5" cy="382.5" r="4" stroke-width="1.6"/>
 <path d="M1155.5 390l3-2M1163 377l3 2" />
 <ellipse cx="1198.6" cy="366.2" rx="3.8" ry="5.3" stroke-width="2" transform="rotate(-25 1198.6 366.2)"/>
 <!-- pin -->
 <path d="M1123.5 391.5l25-8.5 2.8 7.5-25 8.5z" fill="#fff" stroke-width="1.2"/>
 <path d="M1127 396l23-7.5" stroke-width=".6"/>
 <ellipse cx="1125.5" cy="395.3" rx="3.6" ry="4.4" transform="rotate(-20 1125.5 395.3)" stroke-width="1.2"/>
 <ellipse cx="1125.5" cy="395.3" rx="1.6" ry="2.2" transform="rotate(-20 1125.5 395.3)"/>
 <ellipse cx="1115.5" cy="399.8" rx="3.7" ry="4.8" stroke-width="2" transform="rotate(-25 1115.5 399.8)"/>
 <!-- connecting rod -->
 <path d="M1069 417c0-5 5-10 10-11l7-2c3 0 4 2 3.500 5l-1.500 5c-1.500 3-5 5-9 6.500-5 2-10 1-10-3.500z" fill="#fff" stroke-width="1.3"/>
 <circle cx="1075.8" cy="413.5" r="4.2" stroke-width="1.4"/>
 <circle cx="1075.8" cy="413.5" r="2.2"/>
 <path d="M1069.7 420L1055.5 444M1071.5 421L1057.5 446M1073 421.5L1059.5 447M1080.5 419L1064 450M1078.5 420L1062 449" stroke-width=".9"/>
 <!-- bushing -->
 <path d="M1042 421l8-4.5c3-1 5 1.5 5 4.5 0 2-1 3.5-2.5 4.5l-8 4.5z" fill="#fff" stroke-width="1.3"/>
 <ellipse cx="1044.3" cy="425.3" rx="3.6" ry="4.6" stroke-width="1.3" transform="rotate(-30 1044.3 425.3)"/>
 <ellipse cx="1044.3" cy="425.3" rx="1.6" ry="2.2" transform="rotate(-30 1044.3 425.3)"/>
 <!-- cylinder block -->
 <path d="M1108.5 456.6c0-3 2-5.5 4.4-6.1L1148 427.6c1-2 3-3.9 5.3-3.9l35.2 5.7c9 2 18 8 24.7 13.2 3 1.5 5.3 3.5 5.3 4.4l-1.8 8.8-2 39c-.5 3-1.5 4.5-3 5.5l-38 15.5-51-16.5c-2-1-3-2.5-3.3-4z" fill="#fff" stroke-width="1.3"/>
 <path d="M1108.5 456.6L1137.5 468 1178 478.6 1216.7 455.8"/>
 <path d="M1127 452.2L1156.9 432 1205.3 447 1181.5 468z" stroke-width="1.2"/>
 <path d="M1130 453.5L1157.5 435 1201.5 448.5 1180 465.5z" stroke-width=".6"/>
 <ellipse cx="1166.5" cy="449.6" rx="22" ry="10.6" transform="rotate(-5 1166.5 449.6)" stroke-width="1.3"/>
 <circle cx="1137.5" cy="451.4" r="2.3"/><circle cx="1158.6" cy="436.4" r="2.3"/><circle cx="1196.5" cy="449.6" r="2.5"/><circle cx="1180.6" cy="462.8" r="2.5"/>
 <g stroke-width="1.05">
 <path d="M1110.5 462.8L1138 473.5 1178 484 1215 462"/>
 <path d="M1111 467.5L1138 478 1178 488.5 1214.5 466.5"/>
 <path d="M1111.5 472L1138 482.5 1177.5 493 1214 471"/>
 <path d="M1112 476.5L1138.5 487 1177 497.5 1213.5 475.5"/>
 <path d="M1113 481L1139 491.5 1176.5 502 1213 480"/>
 <path d="M1114 485.5L1139.5 496 1176 506.5 1212.5 484.5"/>
 <path d="M1115.5 490L1140 500.5 1175.5 511 1212 489"/>
 <path d="M1118 494.5L1141 505 1175 515 1211.5 493.5"/>
 </g>
 <g stroke-width="1.6" stroke="#555">
 <path d="M1112 465l24 9.5M1113 474l24 9.5M1114.5 483l24 9.5M1117 492l22 9M1180 486l30-18M1180 495l30-18M1179 504l30-18"/>
 </g>
 <path d="M1144.5 511v7c0 6 10 11.5 22.9 11.7 13 .2 22.9-5 22.9-11.5v-7" fill="#fff" stroke-width="1.2"/><path d="M1144.5 513c2 4 10 7 22.9 7.3s20-3 22.9-7" stroke-width=".8"/>
 <path d="M1150 518c6 4 14 6 20 6s14-2 18-6" stroke-width=".7"/>
 <path d="M1090 496V508.3L1118.7 490"/>
 <path d="M1086.5 484.5l4-1.5 1.5 3.5-4 1.5zM1085.5 492.5l5-1.5 1.8 5-5 1.5z" fill="#fff"/>
 <!-- studs bracket -->
 <path d="M1255.4 446.5V431.1L1225.5 453.1V520M1225.5 525V550M1225.5 555V568.4L1199.1 589.5V576M1199.1 571V551M1199.1 546V526M1199.1 521V513"/>
 <rect x="1252.5" y="447" width="6.5" height="84.4" fill="#fff" rx="2" stroke-width="1.1"/>
 <path d="M1254.3 462v54M1257.2 462v54" stroke-width=".5"/>
 <rect x="1252.5" y="447" width="6.5" height="15" rx="2.5" fill="#444" stroke-width="1"/>
 <rect x="1252.5" y="516.5" width="6.5" height="15" rx="2.5" fill="#444" stroke-width="1"/>
 <path d="M1253.500 451h4.500M1253.500 455h4.500M1253.500 459h4.500M1253.500 520.500h4.500M1253.500 524.500h4.500M1253.500 528h4.500" stroke="#ccc" stroke-width=".7"/>
 <!-- gasket -->
 <path d="M1128.500 567.500L1133 572.500 1172 584c4 1 7.500.500 11-2L1203 566" stroke-width="1"/>
 <path d="M1130 561L1152 543.500c3-2.500 6.500-3 10-1.500L1200 557c4 1.500 4.500 4.500 2 7L1183 579.500c-3 3-7 3.500-11 2L1133 570c-5-1.500-6-5.500-3-9z" fill="#fff" stroke-width="1.3"/>
 <ellipse cx="1164.800" cy="561.300" rx="23.800" ry="12.300" transform="rotate(-3 1164.800 561.300)" stroke-width="1.250"/>
 <circle cx="1134.500" cy="564.500" r="2.600" stroke-width="1.300"/><circle cx="1160.400" cy="545.500" r="2.600" stroke-width="1.300"/><circle cx="1197.300" cy="561.300" r="2.600" stroke-width="1.300"/><circle cx="1177.100" cy="576.300" r="2.600" stroke-width="1.300"/>
 <circle cx="1191" cy="555.500" r="1.400"/><circle cx="1191" cy="566.500" r="1.400"/><circle cx="1170" cy="549" r="1.200"/>
</g>
<g font-family="Liberation Sans" font-weight="bold" font-size="11.2" fill="#111" text-anchor="middle">
 <text x="1067.6" y="289.4">5</text><text x="1262.8" y="295.9">3</text><text x="1262.8" y="344.5">6</text><text x="1262.8" y="371.9">7</text><text x="1262.8" y="398.4">8</text>
 <text x="1111.3" y="340.1">4</text><text x="1087" y="351.3">3</text><text x="1060.6" y="362.3">2</text><text x="1034" y="374.4">1</text>
 <text x="1032.7" y="510.4" font-size="10.5">10</text><text x="1068.3" y="564.1">9</text>
</g>
</svg>


<!--PAGE-->
<!-- doc area scroll elements -->
<svg style="left:345px;top:565px" width="10" height="13" viewBox="0 0 10 13"><path d="M9 0.5v12L1 6.5z" fill="#8a8a8a"/></svg>
<div class="a" style="left:1598px;top:111px;width:1px;height:921px;background:#d9d9d9"></div>
<div class="a" style="left:1599px;top:111px;width:19px;height:921px;background:#efefef"></div>
<div class="a" style="left:1618px;top:111px;width:1px;height:921px;background:#dcdcdc"></div>
<div class="a" style="left:1619px;top:111px;width:13px;height:921px;background:#f4f4f4"></div>
<svg style="left:1602px;top:118px" width="11" height="7" viewBox="0 0 11 7"><path d="M0.5 6.5L5.5 1l5 5.5z" fill="#222"/></svg>
<svg style="left:1603px;top:1018px" width="11" height="7" viewBox="0 0 11 7"><path d="M0.5 0.5h10L5.5 6z" fill="#444"/></svg>
<div class="a" style="left:1598px;top:401px;width:19px;height:19px;border:1px solid #8e8e8e;border-radius:2px;background:linear-gradient(180deg,#f6f6f6,#dadada)"></div>
<div class="a" style="left:1602px;top:405px;width:10px;height:1px;background:#444"></div>
<div class="a" style="left:1602px;top:408px;width:10px;height:1px;background:#444"></div>
<div class="a" style="left:1602px;top:411px;width:10px;height:1px;background:#444"></div>
<div class="a" style="left:1602px;top:414px;width:10px;height:1px;background:#444"></div>
<svg style="left:1620px;top:564px" width="10" height="14" viewBox="0 0 10 14"><path d="M1 0.5v13L9.5 7z" fill="#8a8a8a"/></svg>

<!-- right pane -->
<svg style="left:1663px;top:141px" width="33" height="29" viewBox="0 0 33 29">
  <path d="M16.3 1.8c7.3 0 13.2 4.4 13.2 10s-5.9 10-13.2 10c-1.6 0-3.2-.2-4.6-.6L4.3 25.8l2.5-6.3C4.4 17.700 3.1 14.900 3.1 11.800 3.100 6.200 9 1.800 16.300 1.800z" fill="#fff6dd" stroke="#f3cb69" stroke-width="2.6" stroke-linejoin="round"/>
  <path d="M10.500 11h12M10.500 13h12" stroke="#f3cb69" stroke-width="1"/>
</svg>
<div class="t" style="left:1707px;top:145px;font-size:21px;color:#717171;transform:scaleX(.93)">Comment</div>
<svg style="left:1663px;top:196px" width="33" height="30" viewBox="0 0 33 30">
  <path d="M2 27.800L4.800 18.500 20.300 3c1.600-1.600 4.200-1.600 5.800 0l1.800 1.800c1.600 1.600 1.600 4.200 0 5.800L12.300 26 8.500 27.800z" fill="#e4e0fb" stroke="#8f84ee" stroke-width="2.8" stroke-linejoin="round"/>
  <path d="M9.500 23.500L25 8" stroke="#8f84ee" stroke-width="2.200"/>
  <path d="M2 27.800h10.500" stroke="#8f84ee" stroke-width="2.600" stroke-linecap="round"/>
  <path d="M19.500 27.300c.800-2 2-4.500 2.800-3.500s-.300 3.500 1.200 3.500 1.500-3 2.500-3 .500 3 2 3 1.800-1.800 2.300-2.300" fill="none" stroke="#8f84ee" stroke-width="2.600" stroke-linecap="round" stroke-linejoin="round"/>
</svg>
<div class="t" style="left:1707px;top:201px;font-size:21px;color:#717171;transform:scaleX(.94)">Fill &amp; Sign</div>
<div class="a" style="left:1649px;top:908px;width:256px;height:1px;background:#dedede"></div>
<div class="t" style="left:1633px;width:287px;text-align:center;top:936px;font-size:15.5px;color:#6b6b6b;-webkit-text-stroke:.45px #6b6b6b;transform:scaleX(1.095);transform-origin:50% 0">Store and share files in the</div>
<div class="t" style="left:1633px;width:287px;text-align:center;top:956px;font-size:15.5px;color:#6b6b6b;-webkit-text-stroke:.45px #6b6b6b;transform:scaleX(1.075);transform-origin:50% 0">Document Cloud</div>
<div class="t" style="left:1633px;width:287px;text-align:center;top:989px;font-size:15px;color:#2d7bcf;transform:scaleX(.97);transform-origin:50% 0">Learn More</div>

<div class="a" style="left:0;top:1032px;width:1920px;height:1px;background:#221914"></div>
<div class="a" style="left:0;top:1033px;width:1920px;height:1px;background:#8f8077"></div>
<!-- start orb -->
<svg style="left:10px;top:1034px" width="46" height="46" viewBox="0 0 46 46">
  <defs>
    <radialGradient id="orb" cx="50%" cy="70%" r="60%"><stop offset="0" stop-color="#7fe0ff"/><stop offset=".45" stop-color="#2a7fc0"/><stop offset="1" stop-color="#0d2f58"/></radialGradient>
    <linearGradient id="gl" x1="0" y1="0" x2="0" y2="1"><stop offset="0" stop-color="#fff" stop-opacity=".55"/><stop offset="1" stop-color="#fff" stop-opacity="0"/></linearGradient>
  </defs>
  <circle cx="23" cy="22" r="21.5" fill="url(#orb)" stroke="#0a1a30" stroke-width="1"/>
  <path d="M11 12c3-1.5 6-1 8.5.5l-2 8c-2.5-1.5-5-2-8-1z" fill="#f06a2a"/>
  <path d="M21 13c3 1.5 6 2 9.5.5l-2 8c-3 1.2-6 1-9-.5z" fill="#7bc34a"/>
  <path d="M9 21c3-1 5.5-.5 8 1l-2 8c-2.5-1.5-5-2-8-1z" fill="#3aa0e8"/>
  <path d="M18.5 22.5c3 1.5 6 2 9.5.5l-2 8c-3 1.2-6 1-9-.5z" fill="#f8c02a"/>
  <ellipse cx="23" cy="12" rx="16" ry="9" fill="url(#gl)"/>
</svg>
<!-- task buttons -->
<div class="a tb" style="left:72px"></div>
<div class="a tb" style="left:142px"></div>
<div class="a tb" style="left:212px"></div>
<div class="a tb" style="left:352px"></div>
<div class="a tb" style="left:422px"></div>
<div class="a tb" style="left:492px"></div>
<div class="a tb act" style="left:562px"></div>
<!-- chrome -->
<svg style="left:86px;top:1038px" width="37" height="37" viewBox="0 0 36 36">
  <circle cx="18" cy="18" r="17.5" fill="#db4437"/>
  <path d="M18 18L33.2 9.3A17.5 17.5 0 0 1 18 35.5z" fill="#f4c20d"/>
  <path d="M18 18L18 35.5A17.5 17.5 0 0 1 2.8 9.3z" fill="#0f9d58"/>
  <path d="M18 18L2.8 9.3A17.5 17.5 0 0 1 33.2 9.3z" fill="#db4437"/>
  <path d="M18 10.5h15.2M11.5 21.8L4 8.5M24.5 21.8L17 35" stroke="none"/>
  <circle cx="18" cy="18" r="8" fill="#fff"/>
  <circle cx="18" cy="18" r="6.3" fill="#4a89dc"/>
</svg>
<!-- outlook -->
<svg style="left:156px;top:1037px" width="37" height="38" viewBox="0 0 37 38">
  <rect x="19" y="7" width="17" height="22" fill="#1d5fb0"/>
  <rect x="21" y="9.5" width="13" height="16" fill="#fff"/>
  <path d="M21 10l6.5 7 6.5-7" fill="none" stroke="#1d5fb0" stroke-width="1.8"/>
  <path d="M0 6.5L21 1v36L0 31.5z" fill="#0a6fd0"/>
  <ellipse cx="9.5" cy="19" rx="4.5" ry="6" fill="none" stroke="#fff" stroke-width="2.8"/>
</svg>
<!-- explorer -->
<svg style="left:225px;top:1037px" width="40" height="38" viewBox="0 0 40 38">
  <rect x="2" y="3" width="13" height="8" fill="#f4dc8a" stroke="#c9a64a" stroke-width=".8"/>
  <rect x="4" y="1.5" width="7" height="4" fill="#fff"/><rect x="5" y="2.5" width="2" height="2" fill="#3a9a4a"/>
  <rect x="14" y="5" width="12" height="6" fill="#fff"/><rect x="15" y="6" width="2" height="2" fill="#d03a2a"/>
  <rect x="25" y="7" width="12" height="6" fill="#fff"/><rect x="26" y="8" width="2" height="2" fill="#3a8ad0"/>
  <path d="M1 9h38v26H1z" fill="#f3d98a" stroke="#c8a450" stroke-width=".8"/>
  <path d="M1 9h38v10H1z" fill="#f8e6a8"/>
  <path d="M4.5 37V24.5c0-1 1-2 2-2h27c1 0 2 1 2 2V37h-6.5v-6.5h-18V37z" fill="#7cc4ea" stroke="#3d8fc6" stroke-width="1"/>
</svg>
<!-- NJ -->
<div class="a" style="left:299px;top:1040px;width:32px;height:32px;background:#c9c9c9"></div>
<svg style="left:299px;top:1040px" width="32" height="32" viewBox="0 0 32 32">
  <path d="M13.200 .100L24.700 4.900 22.700 7.600 20.600 18.400 22 19.100 19.300 23.800 14.600 29.900 13.200 32 11.900 31.300 11.900 28.600 5.800 23.200 8.500 19.100 10.500 14.400 9.800 7.600z" fill="#0c8a14"/>
</svg>
<div class="t" style="left:303px;top:1046px;font-size:15px;font-weight:bold;color:#fff;letter-spacing:-1.5px;transform:scaleX(1.05)">NJ</div>
<!-- calculator -->
<svg style="left:371px;top:1037px" width="29" height="38" viewBox="0 0 29 38">
  <rect x="1" y="1" width="27" height="36" rx="3" fill="#a9cfef" stroke="#5b8fbf" stroke-width="1.2"/>
  <rect x="4" y="4" width="21" height="9" fill="#e9f3fb" stroke="#7ea6c8" stroke-width=".8"/>
  <rect x="4" y="4" width="21" height="1.5" fill="#f0c060"/>
  <g fill="#fff" opacity=".9">
   <rect x="4" y="16" width="4" height="3"/><rect x="9.5" y="16" width="4" height="3"/><rect x="15" y="16" width="4" height="3"/><rect x="20.5" y="16" width="4" height="3"/>
   <rect x="4" y="21" width="4" height="3"/><rect x="9.5" y="21" width="4" height="3"/><rect x="15" y="21" width="4" height="3"/><rect x="20.5" y="21" width="4" height="3"/>
   <rect x="4" y="26" width="4" height="3"/><rect x="9.5" y="26" width="4" height="3"/><rect x="15" y="26" width="4" height="3"/>
   <rect x="4" y="31" width="4" height="3"/><rect x="9.5" y="31" width="4" height="3"/><rect x="15" y="31" width="4" height="3"/>
  </g>
  <rect x="20.5" y="26" width="4" height="8" fill="#f0a830"/>
</svg>
<!-- computer -->
<svg style="left:435px;top:1038px" width="40" height="35" viewBox="0 0 40 35">
  <rect x="7" y="0.5" width="25" height="18" fill="#111"/>
  <rect x="9" y="3" width="21" height="12" fill="#ffee00"/>
  <path d="M11 13l5-5 3 3 6-5" fill="none" stroke="#111" stroke-width="2"/>
  <rect x="6" y="21" width="28" height="7" fill="#e6e6e6" stroke="#333" stroke-width=".8"/>
  <rect x="10" y="23.5" width="2" height="2" fill="#d02020"/><rect x="22" y="23" width="9" height="1.2" fill="#333"/><rect x="22" y="25.5" width="9" height="1.2" fill="#333"/>
  <path d="M4 29.5h32l3.5 5H0.5z" fill="#f0f0f0" stroke="#333" stroke-width=".8"/>
  <path d="M5 31.5h30" stroke="#666" stroke-width="1.2" stroke-dasharray="1 1"/>
</svg>
<!-- paint -->
<svg style="left:505px;top:1037px" width="40" height="38" viewBox="0 0 40 38">
  <path d="M3 22c-3-8 3-15 13-16s17 4 16 9-6 5-9 6-2 5-5 7-12 2-15-6z" fill="#a9d3ef" stroke="#6aa0c8" stroke-width="1"/>
  <circle cx="9" cy="19" r="3" fill="#e33"/><circle cx="14" cy="12" r="3" fill="#4b4"/><circle cx="21" cy="10" r="3" fill="#fb3"/><circle cx="16" cy="22" r="1.8" fill="#222"/>
  <path d="M20 36L33 8" stroke="#e0892a" stroke-width="2.6"/>
  <path d="M31 9l3-7 4 2-3 7z" fill="#f0c080"/>
</svg>
<!-- acrobat -->
<svg style="left:576px;top:1037px" width="37" height="36" viewBox="0 0 37 36">
  <rect x="1.500" y="1.500" width="34" height="33" fill="#2b0906" stroke="#d3261c" stroke-width="3"/>
  <path d="M9 27.500c1.500 1 4-2 6.500-7s4-10 3.500-13-2-2-2 .500c0 4 3 10 7 13.500 3 2.500 6 3 6.500 1.500s-2-2-6-2-10 1.500-14 3.500c-2 1-3 2-1.500 3z" fill="none" stroke="#fff" stroke-width="1.300"/>
</svg>
<!-- tray -->
<svg style="left:1701px;top:1054px" width="11" height="6" viewBox="0 0 11 6"><path d="M0.5 5.5L5.5 0.5l5 5z" fill="#fff"/></svg>
<svg style="left:1729px;top:1047px" width="21" height="20" viewBox="0 0 21 20">
  <rect x="5" y="5" width="15" height="10" fill="none" stroke="#fff" stroke-width="1.6"/>
  <rect x="1" y="2" width="5" height="8" fill="#e8e8e8" stroke="#555" stroke-width=".6"/><rect x="2.5" y="0.5" width="2" height="2" fill="#ddd"/>
  <path d="M12 15v3M8 19h9" stroke="#fff" stroke-width="1.6"/>
</svg>
<svg style="left:1759px;top:1048px" width="20" height="18" viewBox="0 0 20 18">
  <path d="M1 6h4l5-5v16l-5-5H1z" fill="#fff"/>
  <path d="M12.5 6c1 1.5 1 4.5 0 6M15 4c2 2.5 2 7.5 0 10M17.5 2.5c3 3.5 3 9.5 0 13" fill="none" stroke="#fff" stroke-width="1.2"/>
</svg>
<svg style="left:1790px;top:1048px" width="19" height="18" viewBox="0 0 19 18">
  <path d="M1.5 0.5v17" stroke="#fff" stroke-width="1.6"/>
  <path d="M2.5 1.5c3-1 5 1 8 .5s4-1 6-.5v7c-2-.5-3 0-6 .5s-5-1.5-8-.5z" fill="#fff"/>
</svg>
<div class="t" style="left:1835px;top:1040px;font-size:14.5px;color:#fff;transform:scaleX(.93)">3:59 PM</div>
<div class="t" style="left:1826px;top:1062px;font-size:14.5px;color:#fff;transform:scaleX(1.06)">6/14/2017</div>
<div class="a" style="left:1905px;top:1034px;width:15px;height:45px;border:1px solid rgba(255,255,255,.35);border-right:none;background:linear-gradient(180deg,rgba(255,255,255,.18),rgba(255,255,255,.05))"></div>

</body></html>
